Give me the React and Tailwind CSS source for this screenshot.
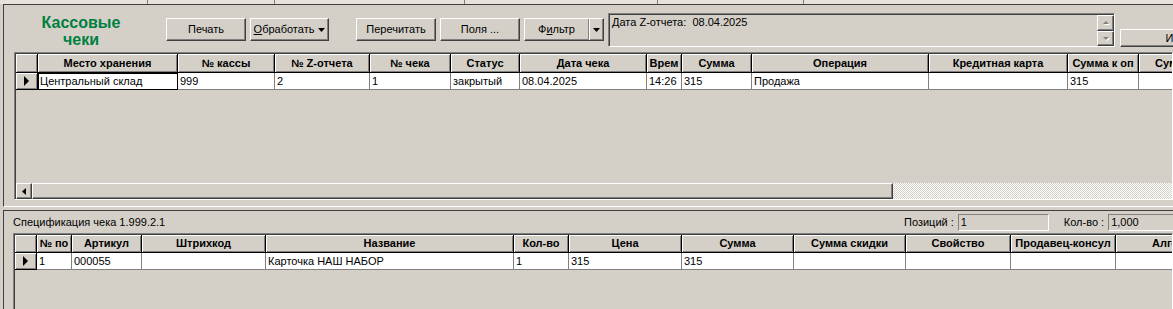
import React from 'react';

const raised =
  'border border-t-white border-l-white border-r-[#404040] border-b-[#404040] shadow-[inset_-1px_-1px_0_#808080]';
const sunken =
  'border border-t-[#808080] border-l-[#808080] border-r-white border-b-white shadow-[inset_1px_1px_0_#404040]';
const headCell =
  'flex-none flex items-center justify-center h-full border-r border-b border-black shadow-[inset_1px_1px_0_#fff,inset_-1px_-1px_0_#808080] font-bold whitespace-nowrap overflow-hidden';
const dataCell =
  'flex-none h-full border-r border-b border-[#808080] bg-white pl-[2px] leading-[16px] whitespace-nowrap overflow-hidden';

const topCols = [
  { w: 'w-[22px]', label: '' },
  { w: 'w-[140px]', label: 'Место хранения', v: 'Центральный склад', focus: true },
  { w: 'w-[97px]', label: '№ кассы', v: '999' },
  { w: 'w-[95px]', label: '№ Z-отчета', v: '2' },
  { w: 'w-[81px]', label: '№ чека', v: '1' },
  { w: 'w-[69px]', label: 'Статус', v: 'закрытый' },
  { w: 'w-[127px]', label: 'Дата чека', v: '08.04.2025' },
  { w: 'w-[35px]', label: 'Врем', v: '14:26' },
  { w: 'w-[70px]', label: 'Сумма', v: '315' },
  { w: 'w-[177px]', label: 'Операция', v: 'Продажа' },
  { w: 'w-[139px]', label: 'Кредитная карта', v: '' },
  { w: 'w-[71px]', label: 'Сумма к оп', v: '315' },
  { w: 'w-[110px]', label: 'Сумма скидки', v: '' },
];

const bottomCols = [
  { w: 'w-[22px]', label: '' },
  { w: 'w-[35px]', label: '№ по', v: '1' },
  { w: 'w-[70px]', label: 'Артикул', v: '000055' },
  { w: 'w-[124px]', label: 'Штрихкод', v: '' },
  { w: 'w-[248px]', label: 'Название', v: 'Карточка НАШ НАБОР' },
  { w: 'w-[55px]', label: 'Кол-во', v: '1' },
  { w: 'w-[113px]', label: 'Цена', v: '315' },
  { w: 'w-[112px]', label: 'Сумма', v: '315' },
  { w: 'w-[112px]', label: 'Сумма скидки', v: '' },
  { w: 'w-[105px]', label: 'Свойство', v: '' },
  { w: 'w-[105px]', label: 'Продавец-консул', v: '' },
  { w: 'w-[126px]', label: 'Алгоритм', v: '' },
];

const RowMarker = () => (
  <svg width="6" height="10" viewBox="0 0 6 10" className="ml-[8px]">
    <polygon points="0,0 5,5 0,10" fill="#000" />
  </svg>
);

const Grid = ({ cols, headH }) => (
  <div className="flex flex-col flex-none w-[1400px]">
    <div className={`flex ${headH}`}>
      {cols.map((c, i) => (
        <div key={i} className={`${headCell} ${c.w}`}>
          {c.label}
        </div>
      ))}
    </div>
    <div className="flex h-[17px]">
      {cols.map((c, i) =>
        i === 0 ? (
          <div key={i} className={`${headCell} ${c.w} !justify-start`}>
            <RowMarker />
          </div>
        ) : (
          <div
            key={i}
            className={`${dataCell} ${c.w} ${c.focus ? 'outline outline-1 outline-black -outline-offset-1' : ''}`}
          >
            {c.v}
          </div>
        )
      )}
    </div>
  </div>
);

const Btn = ({ children, className = '' }) => (
  <div className={`${raised} flex items-center justify-center h-[23px] bg-[#d4d0c8] ${className}`}>
    {children}
  </div>
);

const DisabledArrow = ({ up }) => (
  <div className={`${raised} h-[16px] w-[17px] flex items-center justify-center`}>
    <svg width="8" height="5" viewBox="0 0 8 5">
      {up ? (
        <>
          <polygon points="1,4 4,1 7,4" fill="#fff" transform="translate(1,1)" />
          <polygon points="1,4 4,1 7,4" fill="#808080" />
        </>
      ) : (
        <>
          <polygon points="1,1 7,1 4,4" fill="#fff" transform="translate(1,1)" />
          <polygon points="1,1 7,1 4,4" fill="#808080" />
        </>
      )}
    </svg>
  </div>
);

export default function App() {
  return (
    <div className="w-[1173px] h-[309px] overflow-hidden bg-[#d4d0c8] text-[11px] text-black font-['Liberation_Sans',Arial,sans-serif]">
      {/* strip left from the window above */}
      <div className="flex h-[4px] bg-[#e6e3dd]">
        <div className="w-[148px] border-r border-[#808080]" />
        <div className="w-[127px] border-r border-[#808080]" />
        <div className="w-[190px] border-r border-[#808080]" />
        <div className="w-[193px] border-r border-[#808080]" />
        <div className="w-[146px] border-r border-[#808080]" />
      </div>

      {/* receipts panel */}
      <div className="ml-[3px] border-t border-l border-b border-t-[#404040] border-l-[#404040] border-b-white pb-[6px]">
        <div className="flex items-start h-[47px]">
          <div className="w-[154px] flex-none pt-[9px] text-center text-[16px] leading-[17px] font-bold text-[#008040]">
            Кассовые
            <br />
            чеки
          </div>
          <Btn className="mt-[13px] ml-[8px] w-[80px] flex-none">Печать</Btn>
          <Btn className="mt-[13px] ml-[4px] w-[79px] flex-none gap-[4px]">
            <span>
              <u>О</u>бработать
            </span>
            <svg width="7" height="4" viewBox="0 0 7 4">
              <polygon points="0,0 7,0 3.5,4" fill="#000" />
            </svg>
          </Btn>
          <Btn className="mt-[13px] ml-[27px] w-[80px] flex-none">Перечитать</Btn>
          <Btn className="mt-[13px] ml-[4px] w-[80px] flex-none">Поля ...</Btn>
          <div className={`${raised} mt-[13px] ml-[4px] w-[80px] h-[23px] flex-none flex`}>
            <div className="flex-1 flex items-center justify-center border-r border-[#808080]">
              <span>
                Ф<u>и</u>льтр
              </span>
            </div>
            <div className="w-[14px] flex items-center justify-center border-l border-white">
              <svg width="7" height="4" viewBox="0 0 7 4">
                <polygon points="0,0 7,0 3.5,4" fill="#000" />
              </svg>
            </div>
          </div>
          <div className={`${sunken} mt-[8px] ml-[4px] w-[507px] h-[34px] flex-none flex`}>
            <div className="flex-1 pl-[3px] pt-[1px] leading-[14px]">Дата Z-отчета:&nbsp; 08.04.2025</div>
            <div className="flex flex-col pt-[1px]">
              <DisabledArrow up />
              <DisabledArrow />
            </div>
          </div>
          <Btn className="mt-[24px] ml-[5px] w-[120px] !h-[18px] flex-none">Итоги</Btn>
        </div>

        <div className={`${sunken} ml-[10px] h-[148px] flex flex-col overflow-hidden`}>
          <div className="flex-1 pl-[1px] pt-[1px] overflow-hidden">
            <Grid cols={topCols} headH="h-[19px]" />
          </div>
          <div className="flex h-[16px] flex-none pl-[1px]">
            <div className={`${raised} w-[16px] flex-none flex items-center justify-center`}>
              <svg width="4" height="7" viewBox="0 0 4 7">
                <polygon points="4,0 0,3.5 4,7" fill="#000" />
              </svg>
            </div>
            <div className={`${raised} w-[861px] flex-none`} />
            <div className="flex-1 bg-[repeating-conic-gradient(#fff_0_25%,#d4d0c8_0_50%)] bg-[length:2px_2px]" />
          </div>
        </div>
      </div>

      {/* receipt specification panel */}
      <div className="mt-[3px] ml-[3px] border-t border-l border-[#404040] h-[200px]">
        <div className="flex items-center h-[22px]">
          <div className="w-[900px] flex-none pl-[9px]">Спецификация чека 1.999.2.1</div>
          <div className="flex-none">Позиций :</div>
          <div className="ml-[4px] w-[91px] h-[17px] flex-none border border-t-[#808080] border-l-[#808080] border-r-white border-b-white pl-[2px] leading-[15px]">
            1
          </div>
          <div className="ml-[15px] flex-none">Кол-во :</div>
          <div className="ml-[4px] w-[90px] h-[17px] flex-none border border-t-[#808080] border-l-[#808080] border-r-white border-b-white pl-[2px] leading-[15px]">
            1,000
          </div>
        </div>
        <div className={`${sunken} ml-[9px] h-[120px] overflow-hidden`}>
          <div className="pl-[1px] pt-[1px]">
            <Grid cols={bottomCols} headH="h-[18px]" />
          </div>
        </div>
      </div>
    </div>
  );
}
